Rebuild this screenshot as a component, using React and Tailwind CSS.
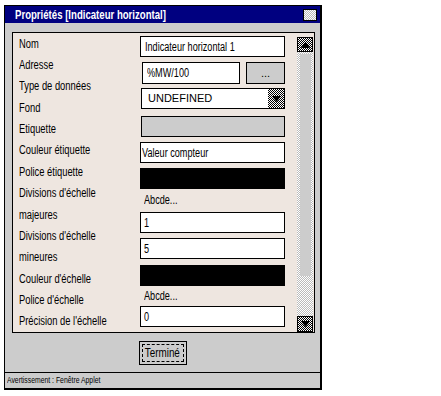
const sans = "font-['Liberation_Sans',Arial,sans-serif]";
const darkChecker = "bg-[conic-gradient(#000_25%,#fff_0_50%,#000_0_75%,#fff_0)] bg-[length:2px_2px]";
const lightChecker = "bg-[conic-gradient(#bbb_25%,#fff_0_50%,#bbb_0_75%,#fff_0)] bg-[length:2px_2px]";

const labels = [
  "Nom",
  "Adresse",
  "Type de données",
  "Fond",
  "Etiquette",
  "Couleur étiquette",
  "Police étiquette",
  "Divisions d'échelle",
  "majeures",
  "Divisions d'échelle",
  "mineures",
  "Couleur d'échelle",
  "Police d'échelle",
  "Précision de l'échelle",
];

// condensed text, the applet font is a narrow face
function N({ children, className = "origin-left scale-x-[0.76]" }) {
  return <span className={`inline-block whitespace-nowrap ${className}`}>{children}</span>;
}

function Box({ className = "", children }) {
  return (
    <div className={`h-[21px] border border-black bg-white flex items-center text-[12px] ${className}`}>
      {children}
    </div>
  );
}

function Triangle({ up }) {
  return (
    <svg width="9" height="6" viewBox="0 0 9 6">
      <path d={up ? "M4.5 0L9 6H0z" : "M0 0h9L4.5 6z"} fill="#000" />
    </svg>
  );
}

export default function App() {
  return (
    <div className={`w-[441px] h-[396px] bg-white pt-[5px] pl-[4px] ${sans}`}>
      <div className="w-[318px] h-[385px] bg-[#cccccc] border-l border-t border-black border-r-2 border-b-2 flex flex-col">
        {/* title bar */}
        <div className="h-[17px] bg-[#000080] flex items-center justify-between pl-[10px] pr-[3px]">
          <span className="text-white font-bold text-[12px] leading-none">
            <N className="origin-left scale-x-[0.8]">Propriétés [Indicateur horizontal]</N>
          </span>
          <div className={`w-[14px] h-[12px] border border-black ${lightChecker}`} />
        </div>

        {/* property panel */}
        <div className="mt-[9px] ml-[7px] mr-[5px] h-[301px] border border-black bg-[#eee6e0] flex">
          <div className="w-[127px] pl-[6px] flex flex-col">
            {labels.map((l, i) => (
              <div key={i} className="h-[21.4px] flex items-center text-[12px] text-black">
                <N className="origin-left scale-x-[0.78]">{l}</N>
              </div>
            ))}
          </div>

          <div className="w-[145px] flex flex-col">
            <Box className="mt-[3px] pl-[4px]">
              <N>Indicateur horizontal 1</N>
            </Box>
            <div className="mt-[5px] h-[22px] flex gap-[6px]">
              <Box className="h-[22px] w-[98px] ml-[2px] pl-[4px]">
                <N>%MW/100</N>
              </Box>
              <div className="flex-1 h-[22px] border border-black bg-[#cccccc] flex items-center justify-center text-[11px]">
                ...
              </div>
            </div>
            <div className="mt-[4px] ml-[1px] h-[21px] border border-black bg-white flex">
              <div className="flex-1 flex items-center pl-[6px] text-[11px]">UNDEFINED</div>
              <div className={`w-[16px] h-full flex items-center justify-center ${darkChecker}`}>
                <Triangle />
              </div>
            </div>
            <div className="mt-[7px] ml-[1px] h-[21px] border border-black bg-[#cccccc]" />
            <Box className="mt-[5px] pl-[1px]">
              <N>Valeur compteur</N>
            </Box>
            <div className="mt-[5px] h-[21px] bg-black" />
            <div className="h-[22px] flex items-center pl-[4px] text-[12px]">
              <N>Abcde...</N>
            </div>
            <Box className="mt-[1px] pl-[3px]">
              <N>1</N>
            </Box>
            <Box className="mt-[5px] pl-[3px]">
              <N>5</N>
            </Box>
            <div className="mt-[6px] h-[21px] bg-black" />
            <div className="h-[20px] flex items-center pl-[4px] text-[12px]">
              <N>Abcde...</N>
            </div>
            <Box className="pl-[3px]">
              <N>0</N>
            </Box>
          </div>

          {/* scrollbar */}
          <div className={`ml-[12px] mt-[4px] w-[16px] flex flex-col ${lightChecker}`}>
            <div className={`h-[15px] border border-black flex items-center justify-center ${darkChecker}`}>
              <Triangle up />
            </div>
            <div className="mt-[2px] ml-[3px] mr-[2px] h-[222px] bg-[#cccccc]" />
            <div className="flex-1" />
            <div className={`h-[16px] border border-black flex items-center justify-center ${darkChecker}`}>
              <Triangle />
            </div>
          </div>
        </div>

        {/* bottom button area */}
        <div className="flex-1 flex items-start justify-center pt-[8px]">
          <div className="w-[48px] h-[24px] border border-black p-[2px] bg-[#cccccc]">
            <div className="w-full h-full border border-dashed border-black flex items-center justify-center text-[12px]">
              <N className="origin-center scale-x-[0.82]">Terminé</N>
            </div>
          </div>
        </div>

        {/* status bar */}
        <div className="h-[16px] border-t border-black flex items-center pl-[2px] text-[9px]">
          <N className="origin-left scale-x-[0.76]">Avertissement : Fenêtre Applet</N>
        </div>
      </div>
    </div>
  );
}
